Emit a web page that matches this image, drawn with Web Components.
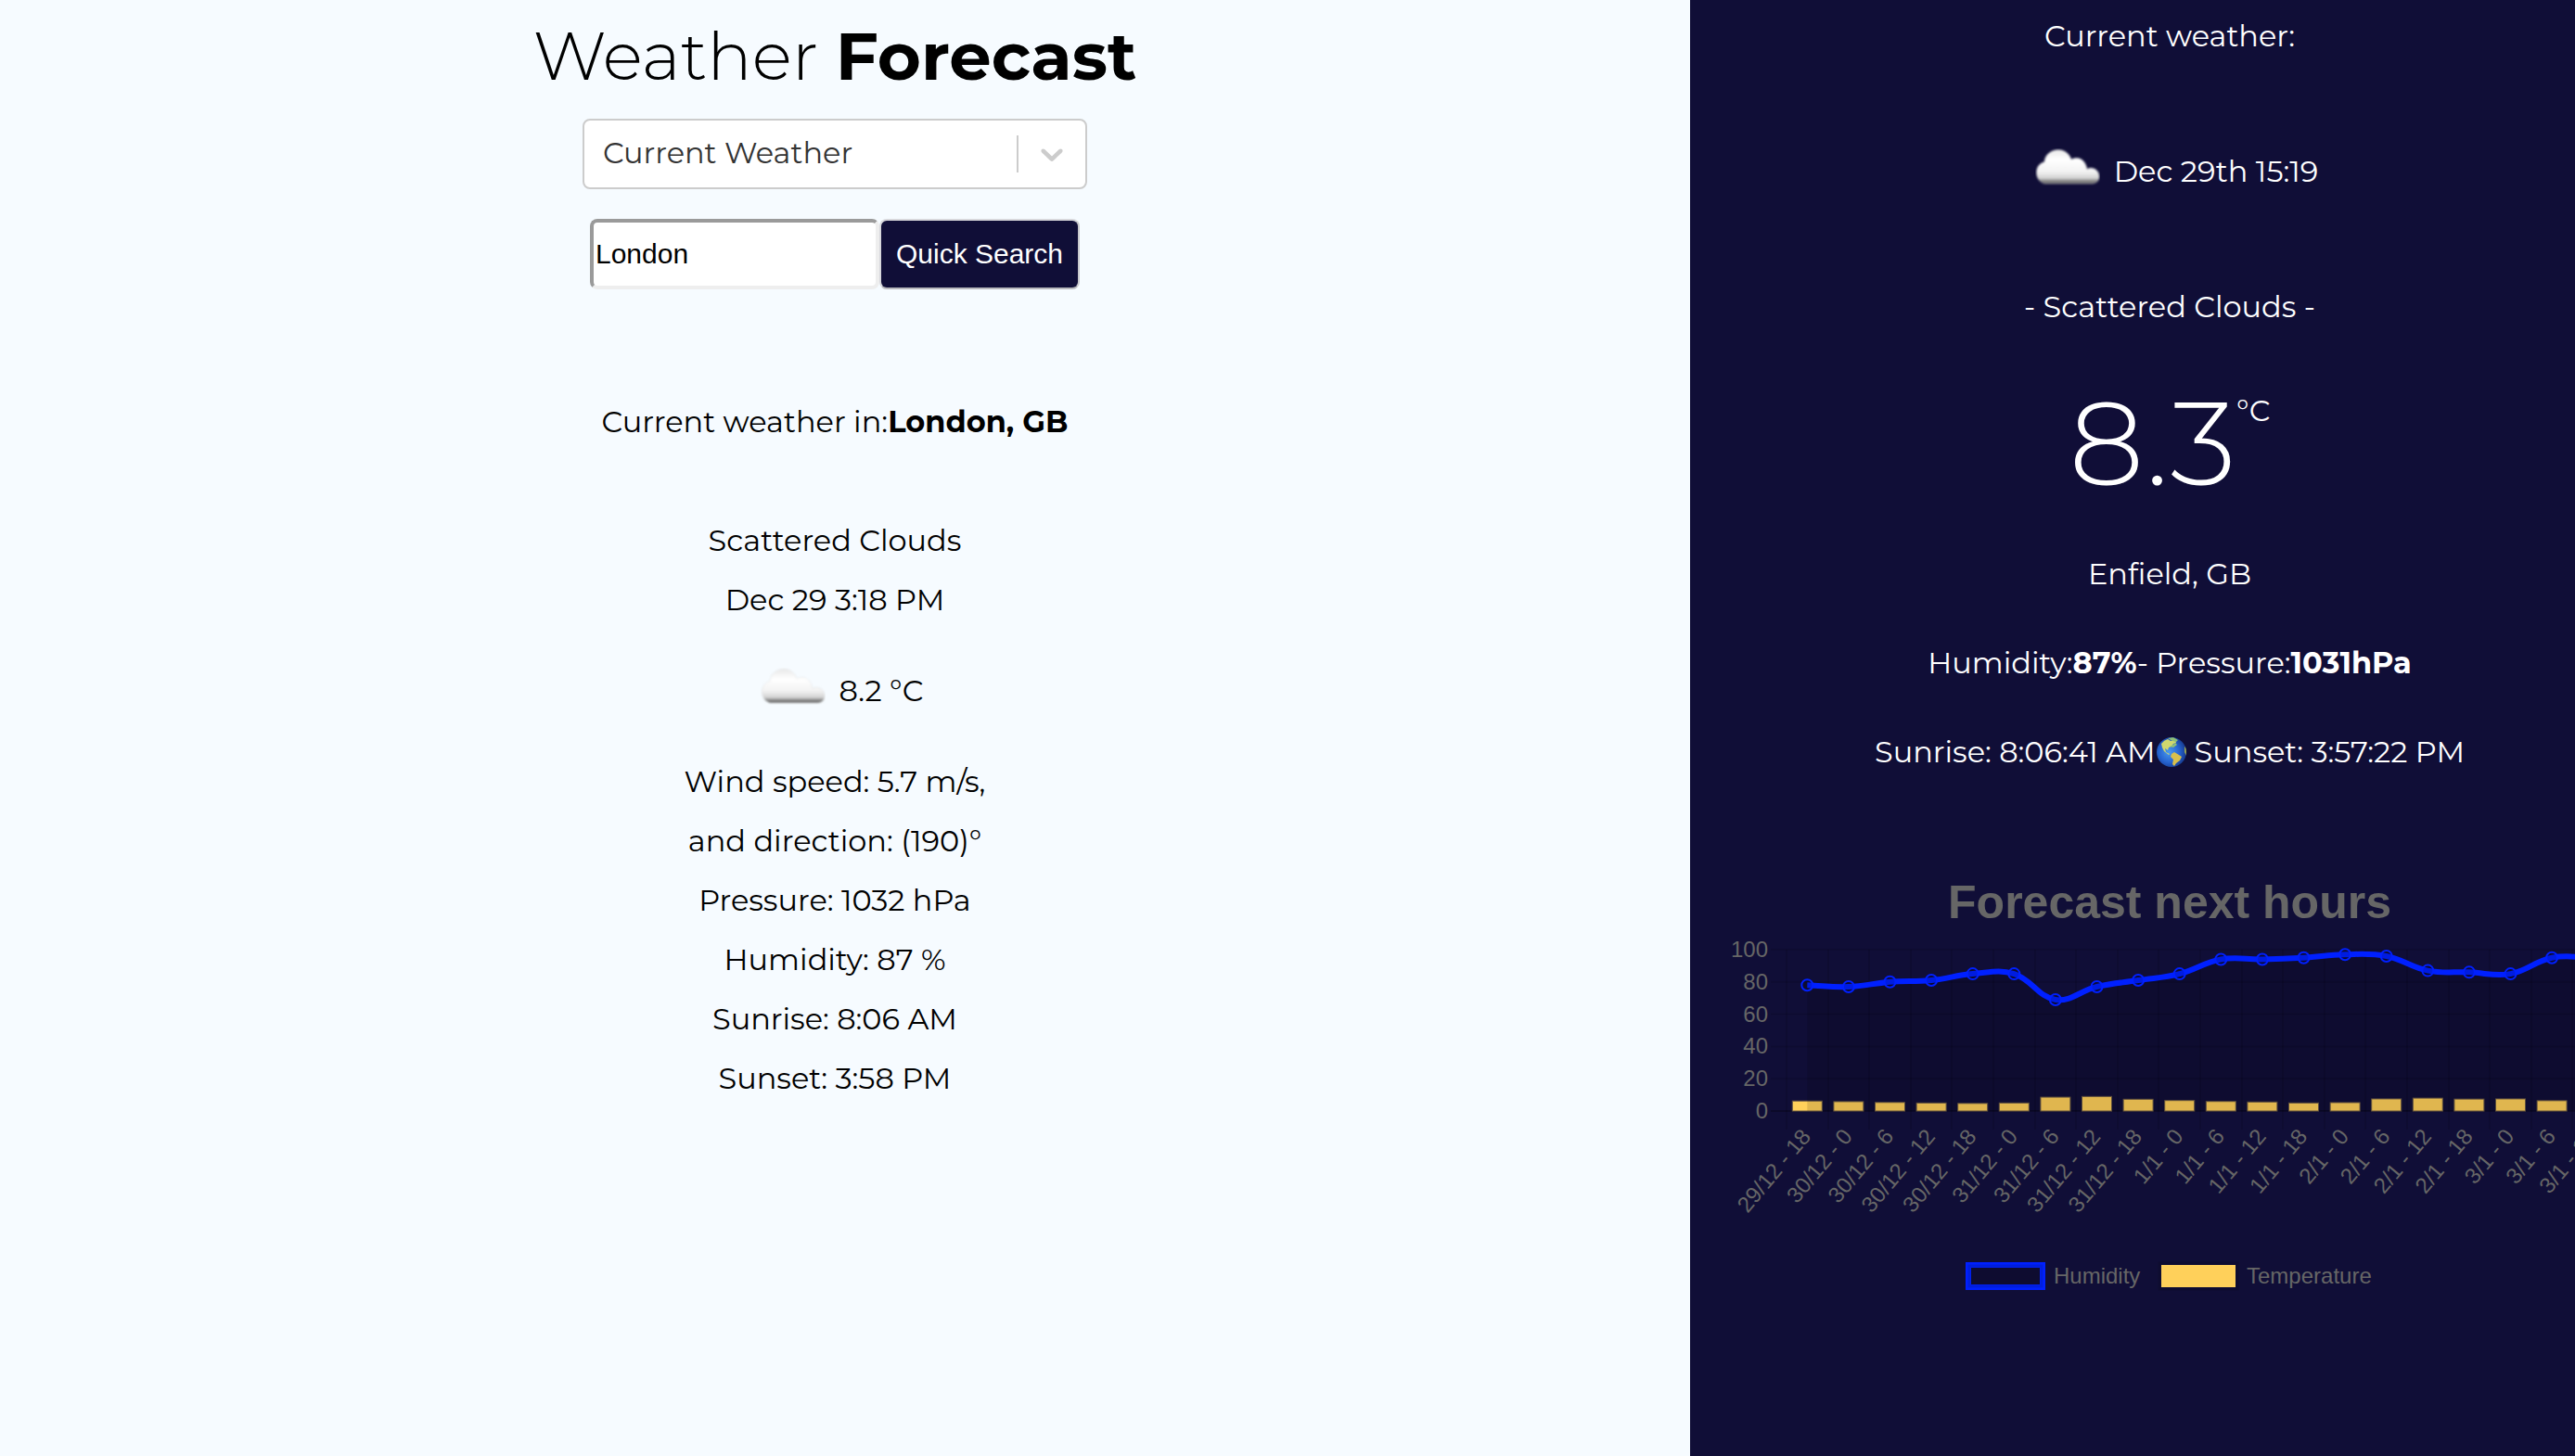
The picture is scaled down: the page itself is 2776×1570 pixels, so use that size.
<!DOCTYPE html>
<html lang="en">
<head>
<meta charset="utf-8">
<meta name="viewport" content="width=device-width">
<title>Weather Forecast</title>
<style>
  body {
    margin: 0;
    overflow-x: hidden;
    background: #f6fbff;
    color: #000;
    font-family: Montserrat, Inter, "Open Sans", sans-serif;
    font-size: 32px;
    line-height: 64px;
    font-variant-ligatures: none;
  }
</style>
</head>
<body>
<weather-app>
  <weather-title slot="main">Weather <strong>Forecast</strong></weather-title>
  <view-picker slot="main"></view-picker>
  <quick-search slot="main"></quick-search>
  <weather-report slot="main"></weather-report>
  <current-panel slot="aside"></current-panel>
</weather-app>

<script>
class Base extends HTMLElement {
  constructor() {
    super();
    this.attachShadow({ mode: "open" }).innerHTML = this.constructor.markup;
  }
}

class WeatherApp extends Base {
  static markup = `
    <style>
      :host { display: grid; grid-template-columns: 1822fr 954fr; min-height: 100vh; overflow: hidden; }
      main { display: flex; flex-direction: column; align-items: center; padding: 16px 22px 0 0; min-width: 0; }
      aside { min-width: 0; background: #100e37; color: #fff; }
    </style>
    <main><slot name="main"></slot></main>
    <aside><slot name="aside"></slot></aside>`;
}

class WeatherTitle extends Base {
  static markup = `
    <style>
      :host { display: block; }
      h1 { margin: 0; font-size: 72px; line-height: 88px; font-weight: 300; white-space: nowrap; }
      ::slotted(strong) { font-weight: 700; }
    </style>
    <h1><slot></slot></h1>`;
}

class ViewPicker extends Base {
  static markup = `
    <style>
      :host { display: grid; width: 544px; margin-top: 24px; }
      select, .arrow { grid-area: 1 / 1; }
      select {
        appearance: none; box-sizing: border-box; width: 100%; height: 76px; margin: 0; padding: 0 78px 2px 20px;
        border: 2px solid #ccc; border-radius: 8px; background: #fff; color: #333; font: inherit; line-height: 40px;
      }
      .arrow { justify-self: end; align-self: center; display: flex; align-items: center; margin-right: 2px; pointer-events: none; }
      .arrow::before { content: ""; width: 2px; height: 40px; background: #ccc; }
      svg { width: 40px; height: 40px; padding: 0 16px; fill: #ccc; }
    </style>
    <select aria-label="Forecast type">
      <option>Current Weather</option>
      <option>Forecast</option>
    </select>
    <span class="arrow"><svg viewBox="0 0 20 20"><path d="M4.516 7.548c0.436-0.446 1.043-0.481 1.576 0l3.908 3.747 3.908-3.747c0.533-0.481 1.141-0.446 1.574 0 0.436 0.445 0.408 1.197 0 1.615-0.406 0.418-4.695 4.502-4.695 4.502-0.217 0.223-0.502 0.335-0.787 0.335s-0.57-0.112-0.789-0.335c0 0-4.287-4.084-4.695-4.502s-0.436-1.17 0-1.615z"/></svg></span>`;
}

class QuickSearch extends Base {
  static markup = `
    <style>
      :host { display: block; margin-top: 32px; }
      form { display: flex; }
      input, button { box-sizing: border-box; height: 76px; margin: 0; border-radius: 8px; font: 30px "Liberation Sans", Arial, sans-serif; }
      input { width: 312px; padding: 2px; border: 4px solid; border-color: #9a9a9a #eee #eee #9a9a9a; background: #fff; color: #000; }
      button { padding: 0 16px; border: 2px solid; border-color: #d8d8dc #c8c8cc #b8b8bc #d8d8dc; background: #100e37; color: #fff; }
    </style>
    <form>
      <input type="text" value="London" aria-label="City">
      <button type="button">Quick Search</button>
    </form>`;
}

class CloudIcon extends Base {
  static markup = `
    <style>
      :host { display: flex; width: 100px; justify-content: center; padding-bottom: 10px; }
      svg { width: 70px; height: 40px; }
    </style>
    <svg viewBox="0 0 70 40" aria-hidden="true">
      <defs>
        <linearGradient id="g" x1="0" y1="0" x2="0" y2="1">
          <stop offset="0" stop-color="#e9e9e9"/><stop offset=".3" stop-color="#fff"/>
          <stop offset=".65" stop-color="#f2f2f2"/><stop offset=".84" stop-color="#d2d2d2"/>
          <stop offset=".91" stop-color="#8b8b8b"/><stop offset="1" stop-color="#666"/>
        </linearGradient>
        <filter id="b"><feGaussianBlur stdDeviation=".8"/></filter>
      </defs>
      <path filter="url(#b)" fill="url(#g)" stroke="#d4d4d4" stroke-opacity=".4" stroke-width="1" d="M10 38C4 36 1.500 31 1.500 26C1.500 20 5 16 10 14.500C10.500 7 17 1.500 25 1.500C32 1.500 37 6 39 12C41 10.500 43 10.500 46 10.500C51 11 55 16 56 22.500C58 21 60 21 62 21.500C67 22.500 69.500 27 69 31.500C68.500 35 66 37.500 62 38Z"/>
    </svg>`;
}

class GlobeIcon extends Base {
  static markup = `
    <style>
      :host { display: flex; margin: 0 9px 0 1px; }
      svg { width: 32px; height: 32px; }
    </style>
    <svg viewBox="0 0 32 32" aria-hidden="true">
      <defs>
        <radialGradient id="o" cx=".42" cy=".5" r=".58">
          <stop offset="0" stop-color="#4a9af0"/><stop offset=".6" stop-color="#2563cf"/><stop offset="1" stop-color="#173a8e"/>
        </radialGradient>
        <clipPath id="c"><circle cx="16" cy="16" r="16"/></clipPath>
      </defs>
      <g clip-path="url(#c)">
        <rect width="32" height="32" fill="url(#o)"/>
        <path fill="#cfd86e" d="M5 7Q8 3 12 2L15 4L20 3L21 6L18 7L16 10L13 11L12 14L9 12L10 16L14 18L13 19L8 15L6 11Z"/>
        <path fill="#8fbf76" d="M12 1L18 0L23 3L21 5L17 4ZM14 10L18 8L20 6L22 8L18 11Z"/>
        <path fill="#d8c04c" d="M16 18L19 16L24 19L27 21L25 25L21 28L19 31L17 29L18 24L15 21Z"/>
        <path fill="#96a252" d="M30 10L32 12V20L30 16Z"/>
      </g>
    </svg>`;
}

class WeatherReport extends Base {
  static markup = `
    <style>
      :host { display: flex; flex-direction: column; align-items: center; margin-top: 111px; }
      h2, p { margin: 0; font-size: inherit; font-weight: 400; white-space: nowrap; }
      strong { font-weight: 700; }
      h2 { margin-bottom: 64px; }
      .now { display: flex; align-items: center; height: 64px; margin: 34px 0; }
    </style>
    <h2>Current weather in:<strong>London, GB</strong></h2>
    <p>Scattered Clouds</p>
    <p>Dec 29 3:18 PM</p>
    <p class="now"><cloud-icon></cloud-icon>8.2 °C</p>
    <p>Wind speed: 5.7 m/s,</p>
    <p>and direction: (190)°</p>
    <p>Pressure: 1032 hPa</p>
    <p>Humidity: 87 %</p>
    <p>Sunrise: 8:06 AM</p>
    <p>Sunset: 3:58 PM</p>`;
}

class CurrentPanel extends Base {
  static markup = `
    <style>
      :host { display: flex; flex-direction: column; align-items: center; width: calc(100% + 80px); padding-top: 7px; }
      p { display: flex; align-items: center; height: 64px; margin: 0 0 32px; white-space: pre; }
      .wide { margin-bottom: 82px; }
      .temp { align-items: flex-start; height: 160px; margin: -48px 0 30px; font-size: 128px; line-height: 160px; font-weight: 300; }
      .temp span { font-size: 32px; font-weight: 400; line-height: 92px; }
      strong { font-weight: 700; }
      forecast-chart { align-self: stretch; margin-top: 45px; }
    </style>
    <p class="wide">Current weather:</p>
    <p class="wide"><cloud-icon></cloud-icon>Dec 29th 15:19</p>
    <p class="wide">- Scattered Clouds -</p>
    <p class="temp">8.3<span>°C</span></p>
    <p>Enfield, GB</p>
    <p>Humidity:<strong>87%</strong>- Pressure:<strong>1031hPa</strong></p>
    <p>Sunrise: 8:06:41 AM<globe-icon></globe-icon>Sunset: 3:57:22 PM</p>
    <forecast-chart></forecast-chart>`;
}

class ForecastChart extends Base {
  static markup = `
    <style>
      :host { display: block; }
      svg { display: block; width: 100%; font: 24px "Liberation Sans", Arial, sans-serif; fill: #666; }
      .title { font-size: 50px; font-weight: 700; }
    </style>
    <svg viewBox="0 0 1034 490" role="img" aria-label="Humidity and temperature for the next hours"></svg>`;

  connectedCallback() {
    const labels = ["29/12 - 18", "30/12 - 0", "30/12 - 6", "30/12 - 12", "30/12 - 18", "31/12 - 0", "31/12 - 6",
      "31/12 - 12", "31/12 - 18", "1/1 - 0", "1/1 - 6", "1/1 - 12", "1/1 - 18", "2/1 - 0", "2/1 - 6", "2/1 - 12",
      "2/1 - 18", "3/1 - 0", "3/1 - 6", "3/1 - 12"];
    const humidity = [78, 77, 80, 81, 85, 85, 69, 77, 81, 85, 94, 94, 95, 97, 96, 87, 86, 85, 95, 95];
    const temps = [6.2, 5.8, 5.3, 5, 4.7, 5, 8.6, 9, 7.3, 6.5, 5.9, 5.6, 5, 5.2, 7.5, 8, 7.4, 7.5, 6.4, 7];
    const left = 104, top = 104, bottom = 278, step = 44.6;
    const cx = i => left + step * (i + 0.5);
    const cy = v => bottom - (bottom - top) * v / 100;
    const out = [];

    for (let v = 0; v <= 100; v += 20) {
      out.push(`<path d="M87 ${cy(v)}H${left + step * 20}" stroke="#000" stroke-opacity="${v ? 0.1 : 0.25}" stroke-width="2"/>`);
      out.push(`<text x="84" y="${cy(v) + 8}" text-anchor="end">${v}</text>`);
    }
    for (let i = 0; i <= 20; i++) {
      out.push(`<path d="M${Math.round(left + step * i)} ${top}V298" stroke="#000" stroke-opacity=".1" stroke-width="2"/>`);
    }
    temps.forEach((t, i) => {
      const x = cx(i) - 16, y = cy(t);
      out.push(`<rect x="${x}" y="${y}" width="32" height="${bottom - y}" fill="#ffd05a" stroke="#6b5a45" stroke-width="1"/>`);
    });

    const pts = humidity.map((v, i) => [cx(i), cy(v)]);
    const ctrl = pts.map((p, i) => {
      const a = pts[i - 1] || p, b = pts[i + 1] || p;
      const d1 = Math.hypot(p[0] - a[0], p[1] - a[1]), d2 = Math.hypot(b[0] - p[0], b[1] - p[1]);
      const f1 = 0.4 * d1 / (d1 + d2), f2 = 0.4 * d2 / (d1 + d2);
      const dx = b[0] - a[0], dy = b[1] - a[1];
      return [p[0] - f1 * dx, p[1] - f1 * dy, p[0] + f2 * dx, p[1] + f2 * dy];
    });
    let curve = `M${pts[0]}`;
    for (let i = 1; i < pts.length; i++) {
      curve += `C${ctrl[i - 1][2]} ${ctrl[i - 1][3]} ${ctrl[i][0]} ${ctrl[i][1]} ${pts[i]}`;
    }
    out.push(`<path d="${curve}V${bottom}H${pts[0][0]}Z" fill="#000" fill-opacity=".12"/>`);
    out.push(`<path d="${curve}" fill="none" stroke="#0020ff" stroke-width="6"/>`);
    pts.forEach(p => out.push(`<circle cx="${p[0]}" cy="${p[1]}" r="6" fill="#000" fill-opacity=".12" stroke="#0020ff" stroke-width="2"/>`));

    labels.forEach((t, i) => {
      out.push(`<text transform="translate(${cx(i) - 1} 301) rotate(-50)" y="8" text-anchor="end">${t}</text>`);
    });

    out.push(`<text class="title" x="517" y="70" text-anchor="middle">Forecast next hours</text>`);
    out.push(`<rect x="300" y="444" width="80" height="24" fill="#000" fill-opacity=".12"/>
      <rect x="300" y="444" width="80" height="24" fill="none" stroke="#0020ff" stroke-width="6"/>
      <rect x="301" y="445" width="78" height="22" fill="none" stroke="#001edd" stroke-width="3"/>
      <text x="392" y="464">Humidity</text>
      <rect x="508" y="444" width="80" height="24" fill="#ffd05a"/>
      <rect x="506" y="442" width="84" height="28" fill="none" stroke="#000" stroke-opacity=".12" stroke-width="3"/>
      <text x="600" y="464">Temperature</text>`);
    this.shadowRoot.querySelector("svg").innerHTML = out.join("");
  }
}

customElements.define("cloud-icon", CloudIcon);
customElements.define("globe-icon", GlobeIcon);
customElements.define("forecast-chart", ForecastChart);
customElements.define("weather-title", WeatherTitle);
customElements.define("view-picker", ViewPicker);
customElements.define("quick-search", QuickSearch);
customElements.define("weather-report", WeatherReport);
customElements.define("current-panel", CurrentPanel);
customElements.define("weather-app", WeatherApp);
</script>
</body>
</html>
